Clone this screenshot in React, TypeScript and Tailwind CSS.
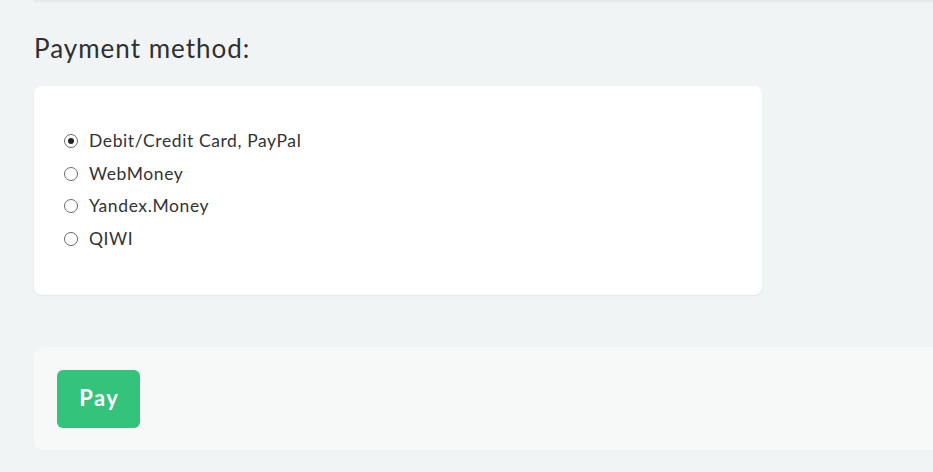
import React from "react";

const options = ["Debit/Credit Card, PayPal", "WebMoney", "Yandex.Money", "QIWI"];

export default function App() {
  return (
    <div
      className="w-[933px] h-[472px] overflow-hidden bg-[#f0f4f5] text-[#333333]"
      style={{ fontFamily: "Lato, 'Noto Sans', sans-serif" }}
    >
      <div className="ml-[34px] w-[940px] h-[1px] bg-[#e4e9eb] shadow-[0_1px_2px_rgba(0,0,0,0.08)]" />
      <div className="pl-[34px]">
        <h2 className="mt-[31px] text-[26px] leading-[32px] tracking-[1px] font-normal text-[#2f2f2f]">Payment method:</h2>
        <div className="mt-[22px] w-[728px] rounded-[8px] bg-white shadow-[0_1px_2px_rgba(0,0,0,0.06)] pt-[39px] pb-[40px] pl-[30px]">
          {options.map((o, i) => (
            <label key={o} className="flex items-center h-[32.5px] cursor-pointer">
              <span className="w-[14px] h-[14px] rounded-full border border-[#6b6b6b] flex items-center justify-center">
                {i === 0 && <span className="w-[6px] h-[6px] rounded-full bg-[#222]" />}
              </span>
              <span className="ml-[11px] text-[17.5px] leading-[20px] tracking-[0.6px] text-[#333]">{o}</span>
            </label>
          ))}
        </div>
        <div className="mt-[52px] w-[920px] rounded-[8px] bg-[#f7f9f9] pt-[23px] pb-[22px] pl-[23px]">
          <button className="w-[83px] h-[58px] rounded-[6px] bg-[#33c37a] text-white text-[22px] leading-[26px] font-bold tracking-[1.5px] pl-[1.5px] pb-[3px]">
            Pay
          </button>
        </div>
      </div>
    </div>
  );
}
